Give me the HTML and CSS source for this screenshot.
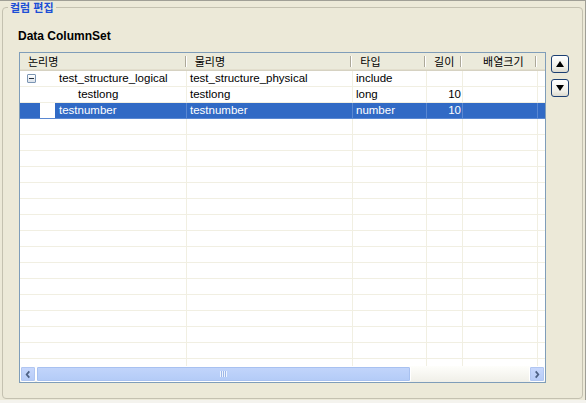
FILE: index.html
```html
<!DOCTYPE html>
<html lang="ko">
<head>
<meta charset="utf-8">
<title>컬럼 편집</title>
<link rel="stylesheet" href="styles.css">
</head>
<body>
<div class="window">
  <fieldset class="group">
    <legend class="group-title">컬럼 편집</legend>
    <div class="group-body">
      <div class="caption">Data ColumnSet</div>
      <div class="editor">
        <div class="grid">
          <div class="head">
            <div class="hc c1">논리명</div>
            <div class="hc c2">물리명</div>
            <div class="hc c3">타입</div>
            <div class="hc c4 center">길이</div>
            <div class="hc c5 wide">배열크기</div>
            <div class="hc c6 last"></div>
          </div>
          <div class="rows">
            <div class="row">
              <div class="cell c1 tree"><span class="rh"><span class="toggle"></span></span><span class="ind"></span><span class="txt">test_structure_logical</span></div>
              <div class="cell c2">test_structure_physical</div>
              <div class="cell c3">include</div>
              <div class="cell c4 num"></div>
              <div class="cell c5"></div>
              <div class="cell c6"></div>
            </div>
            <div class="row">
              <div class="cell c1 tree"><span class="rh"></span><span class="ind"></span><span class="ind2"></span><span class="txt">testlong</span></div>
              <div class="cell c2">testlong</div>
              <div class="cell c3">long</div>
              <div class="cell c4 num">10</div>
              <div class="cell c5"></div>
              <div class="cell c6"></div>
            </div>
            <div class="row selected">
              <div class="cell c1 tree"><span class="rh"></span><span class="ind"></span><span class="txt">testnumber</span></div>
              <div class="cell c2">testnumber</div>
              <div class="cell c3">number</div>
              <div class="cell c4 num">10</div>
              <div class="cell c5"></div>
              <div class="cell c6"></div>
            </div>
            <div class="row"><div class="cell c1"></div><div class="cell c2"></div><div class="cell c3"></div><div class="cell c4"></div><div class="cell c5"></div><div class="cell c6"></div></div>
            <div class="row"><div class="cell c1"></div><div class="cell c2"></div><div class="cell c3"></div><div class="cell c4"></div><div class="cell c5"></div><div class="cell c6"></div></div>
            <div class="row"><div class="cell c1"></div><div class="cell c2"></div><div class="cell c3"></div><div class="cell c4"></div><div class="cell c5"></div><div class="cell c6"></div></div>
            <div class="row"><div class="cell c1"></div><div class="cell c2"></div><div class="cell c3"></div><div class="cell c4"></div><div class="cell c5"></div><div class="cell c6"></div></div>
            <div class="row"><div class="cell c1"></div><div class="cell c2"></div><div class="cell c3"></div><div class="cell c4"></div><div class="cell c5"></div><div class="cell c6"></div></div>
            <div class="row"><div class="cell c1"></div><div class="cell c2"></div><div class="cell c3"></div><div class="cell c4"></div><div class="cell c5"></div><div class="cell c6"></div></div>
            <div class="row"><div class="cell c1"></div><div class="cell c2"></div><div class="cell c3"></div><div class="cell c4"></div><div class="cell c5"></div><div class="cell c6"></div></div>
            <div class="row"><div class="cell c1"></div><div class="cell c2"></div><div class="cell c3"></div><div class="cell c4"></div><div class="cell c5"></div><div class="cell c6"></div></div>
            <div class="row"><div class="cell c1"></div><div class="cell c2"></div><div class="cell c3"></div><div class="cell c4"></div><div class="cell c5"></div><div class="cell c6"></div></div>
            <div class="row"><div class="cell c1"></div><div class="cell c2"></div><div class="cell c3"></div><div class="cell c4"></div><div class="cell c5"></div><div class="cell c6"></div></div>
            <div class="row"><div class="cell c1"></div><div class="cell c2"></div><div class="cell c3"></div><div class="cell c4"></div><div class="cell c5"></div><div class="cell c6"></div></div>
            <div class="row"><div class="cell c1"></div><div class="cell c2"></div><div class="cell c3"></div><div class="cell c4"></div><div class="cell c5"></div><div class="cell c6"></div></div>
            <div class="row"><div class="cell c1"></div><div class="cell c2"></div><div class="cell c3"></div><div class="cell c4"></div><div class="cell c5"></div><div class="cell c6"></div></div>
            <div class="row"><div class="cell c1"></div><div class="cell c2"></div><div class="cell c3"></div><div class="cell c4"></div><div class="cell c5"></div><div class="cell c6"></div></div>
            <div class="row"><div class="cell c1"></div><div class="cell c2"></div><div class="cell c3"></div><div class="cell c4"></div><div class="cell c5"></div><div class="cell c6"></div></div>
            <div class="row"><div class="cell c1"></div><div class="cell c2"></div><div class="cell c3"></div><div class="cell c4"></div><div class="cell c5"></div><div class="cell c6"></div></div>
          </div>
          <div class="hscroll">
            <div class="sbtn"><svg width="16" height="15" viewBox="0 0 16 15"><path d="M9.5 4 L6.5 7.5 L9.5 11" fill="none" stroke="#4d6185" stroke-width="2"/></svg></div>
            <div class="track">
              <div class="thumb"><span class="grip"></span></div>
              <div class="rest"></div>
            </div>
            <div class="sbtn"><svg width="16" height="15" viewBox="0 0 16 15"><path d="M6.5 4 L9.5 7.5 L6.5 11" fill="none" stroke="#4d6185" stroke-width="2"/></svg></div>
          </div>
        </div>
        <div class="movers">
          <div class="mbtn"><svg width="10" height="8" viewBox="0 0 10 8"><path d="M5 1 L9 7 L1 7 Z" fill="#000"/></svg></div>
          <div class="mbtn"><svg width="10" height="8" viewBox="0 0 10 8"><path d="M1 1 L9 1 L5 7 Z" fill="#000"/></svg></div>
        </div>
      </div>
    </div>
  </fieldset>
</div>
</body>
</html>
```

FILE: styles.css
```css
html, body {
  margin: 0;
  padding: 0;
}
body {
  width: 586px;
  height: 403px;
  overflow: hidden;
  background: #f4f3ee;
  font-family: "Liberation Sans", "Noto Sans CJK KR", sans-serif;
  font-size: 11.5px;
  color: #000;
}
.window {
  box-sizing: border-box;
  width: 586px;
  height: 400px;
  background: #ece9d8;
  border-top: 1px solid #a09f96;
  border-right: 1px solid #a09f96;
  padding: 0 2px 0 2px;
}
.group {
  margin: 0;
  padding: 0;
  height: 398px;
  box-sizing: border-box;
  border: 1px solid #c4c1b0;
  border-radius: 4px;
  min-width: 0;
}
.group-title {
  margin-left: 5px;
  padding: 0 2px;
  font-family: "Noto Sans CJK KR", sans-serif;
  font-size: 11px;
  font-weight: bold;
  line-height: 13px;
  color: #1d4fd6;
}
.group-body {
  padding: 15px 0 0 15px;
}
.caption {
  font-family: "Liberation Sans", sans-serif;
  font-weight: bold;
  font-size: 12px;
  line-height: 14px;
  height: 14px;
}
.editor {
  display: flex;
  gap: 5px;
  margin-top: 9px;
  margin-left: 1px;
}
.grid {
  box-sizing: border-box;
  width: 527px;
  height: 331px;
  border: 1px solid #7f9db9;
  background: #fff;
  display: flex;
  flex-direction: column;
}
.head {
  display: flex;
  height: 18px;
  flex: none;
  box-sizing: border-box;
  background: #ebeadb;
  border-bottom: 1px solid #d6d2c2;
  box-shadow: inset 0 -1px 0 #e2decd;
}
.hc {
  box-sizing: border-box;
  height: 17px;
  line-height: 17px;
  padding-left: 8px;
  font-family: "Noto Sans CJK KR", sans-serif;
  font-size: 11px;
  color: #000;
  background-image: linear-gradient(#aca899, #aca899), linear-gradient(#fff, #fff);
  background-size: 1px 11px, 1px 11px;
  background-position: right 1px top 3px, right 0 top 3px;
  background-repeat: no-repeat;
  white-space: nowrap;
  overflow: hidden;
}
.hc.center { text-align: center; padding-left: 0; }
.hc.wide { padding-left: 21px; }
.hc.last { background-image: none; }
.c1 { width: 167px; }
.c2 { width: 166px; }
.c3 { width: 74px; }
.c4 { width: 36px; }
.c5 { width: 75px; }
.c6 { flex: 1; }
.rows {
  flex: 1;
  overflow: hidden;
}
.row {
  display: flex;
  height: 16px;
  box-sizing: border-box;
}
.cell {
  box-sizing: border-box;
  height: 16px;
  line-height: 15px;
  border-right: 1px solid #f1efe2;
  border-bottom: 1px solid #f1efe2;
  padding-left: 3px;
  white-space: nowrap;
  overflow: hidden;
}
.cell.c6 { border-right: none; }
.cell.num { text-align: right; padding-left: 0; padding-right: 1px; }
.cell.tree {
  display: flex;
  padding-left: 0;
}
.rh {
  width: 20px;
  flex: none;
  display: flex;
  align-items: center;
}
.ind { width: 15px; flex: none; }
.ind2 { width: 19px; flex: none; }
.txt { padding-left: 4px; flex: 1; }
.toggle {
  box-sizing: border-box;
  width: 9px;
  height: 9px;
  margin-left: 7px;
  border: 1px solid #7b95b3;
  border-radius: 1px;
  background: linear-gradient(#fff, #dbe2ea);
  position: relative;
}
.toggle::after {
  content: "";
  position: absolute;
  left: 1px;
  top: 3px;
  width: 5px;
  height: 1px;
  background: #24303f;
}
.row.selected .cell {
  background: #316ac5;
  color: #fff;
  border-color: #5a88d2;
}
.row.selected .cell.tree { background: transparent; }
.row.selected .rh,
.row.selected .txt { background: #316ac5; }
.row.selected .ind { background: #fff; }
.hscroll {
  flex: none;
  display: flex;
  height: 16px;
  background: linear-gradient(#fefefb, #f0efe8);
}
.sbtn {
  box-sizing: border-box;
  width: 16px;
  height: 16px;
  border: 1px solid #fff;
  border-radius: 2px;
  background: linear-gradient(#c8d8fd, #b6cbf7);
  box-shadow: inset 0 0 0 1px #b1c6f1;
  display: flex;
  align-items: center;
  justify-content: center;
}
.track {
  flex: 1;
  display: flex;
}
.thumb {
  box-sizing: border-box;
  width: 375px;
  height: 16px;
  border: 1px solid #fff;
  border-radius: 2px;
  background: linear-gradient(#c2d5fb, #b3cbf7);
  box-shadow: inset 0 0 0 1px #a8c1f0;
  display: flex;
  align-items: center;
  justify-content: center;
}
.grip {
  width: 7px;
  height: 6px;
  background: repeating-linear-gradient(90deg, #eef4fe 0 1px, #9db7e8 1px 2px);
}
.rest { flex: 1; }
.movers {
  display: flex;
  flex-direction: column;
  gap: 6px;
  margin-top: 3px;
}
.mbtn {
  box-sizing: border-box;
  width: 18px;
  height: 18px;
  border: 1px solid #1c3f72;
  border-radius: 3px;
  background: linear-gradient(#ffffff, #f0efe8 70%, #dcdace);
  display: flex;
  align-items: center;
  justify-content: center;
}
```
